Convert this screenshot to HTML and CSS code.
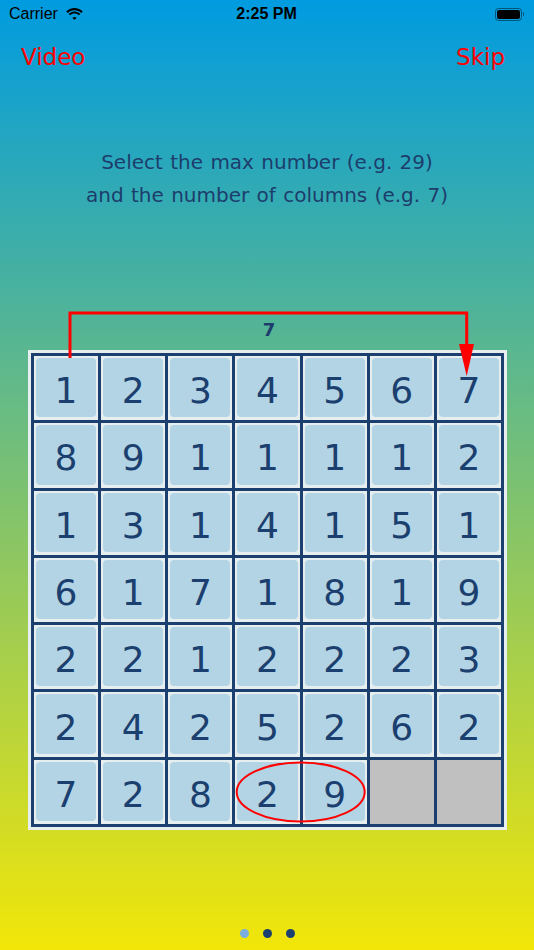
FILE: index.html
```html
<!DOCTYPE html>
<html>
<head>
<meta charset="utf-8">
<link rel="stylesheet" href="styles.css">
</head>
<body>
<div class="screen">
  <div class="status">
    <div class="status-left">
      <span class="carrier">Carrier</span>
      <svg class="wifi" width="19" height="14" viewBox="0 0 19 14">
        <path d="M9.5 3.2c2.6 0 5 1 6.8 2.7l1.5-1.5C15.6 2.3 12.7 1 9.5 1S3.4 2.3 1.2 4.4l1.5 1.5C4.5 4.2 6.9 3.2 9.5 3.2z"/>
        <path d="M9.5 6.6c1.7 0 3.2.6 4.4 1.7l1.5-1.5c-1.6-1.5-3.6-2.4-5.9-2.4s-4.3.9-5.9 2.4l1.5 1.5c1.2-1.1 2.7-1.7 4.4-1.7z"/>
        <path d="M9.5 9.9c.8 0 1.5.3 2.1.8L9.5 12.9 7.4 10.7c.6-.5 1.3-.8 2.1-.8z"/>
      </svg>
    </div>
    <div class="time">2:25 PM</div>
    <div class="status-right">
      <div class="battery"><div class="battery-fill"></div></div>
      <div class="battery-nub"></div>
    </div>
  </div>

  <div class="nav">
    <span class="nav-btn">Video</span>
    <span class="nav-btn">Skip</span>
  </div>

  <div class="instructions">
    <div>Select the max number (e.g. 29)</div>
    <div>and the number of columns (e.g. 7)</div>
  </div>

  <div class="board">
    <div class="col-label">7</div>
    <div class="frame">
      <div class="grid">
        <div class="cell"><div class="tile">1</div></div>
        <div class="cell"><div class="tile">2</div></div>
        <div class="cell"><div class="tile">3</div></div>
        <div class="cell"><div class="tile">4</div></div>
        <div class="cell"><div class="tile">5</div></div>
        <div class="cell"><div class="tile">6</div></div>
        <div class="cell"><div class="tile">7</div></div>

        <div class="cell"><div class="tile">8</div></div>
        <div class="cell"><div class="tile">9</div></div>
        <div class="cell"><div class="tile">1</div></div>
        <div class="cell"><div class="tile">1</div></div>
        <div class="cell"><div class="tile">1</div></div>
        <div class="cell"><div class="tile">1</div></div>
        <div class="cell"><div class="tile">2</div></div>

        <div class="cell"><div class="tile">1</div></div>
        <div class="cell"><div class="tile">3</div></div>
        <div class="cell"><div class="tile">1</div></div>
        <div class="cell"><div class="tile">4</div></div>
        <div class="cell"><div class="tile">1</div></div>
        <div class="cell"><div class="tile">5</div></div>
        <div class="cell"><div class="tile">1</div></div>

        <div class="cell"><div class="tile">6</div></div>
        <div class="cell"><div class="tile">1</div></div>
        <div class="cell"><div class="tile">7</div></div>
        <div class="cell"><div class="tile">1</div></div>
        <div class="cell"><div class="tile">8</div></div>
        <div class="cell"><div class="tile">1</div></div>
        <div class="cell"><div class="tile">9</div></div>

        <div class="cell"><div class="tile">2</div></div>
        <div class="cell"><div class="tile">2</div></div>
        <div class="cell"><div class="tile">1</div></div>
        <div class="cell"><div class="tile">2</div></div>
        <div class="cell"><div class="tile">2</div></div>
        <div class="cell"><div class="tile">2</div></div>
        <div class="cell"><div class="tile">3</div></div>

        <div class="cell"><div class="tile">2</div></div>
        <div class="cell"><div class="tile">4</div></div>
        <div class="cell"><div class="tile">2</div></div>
        <div class="cell"><div class="tile">5</div></div>
        <div class="cell"><div class="tile">2</div></div>
        <div class="cell"><div class="tile">6</div></div>
        <div class="cell"><div class="tile">2</div></div>

        <div class="cell"><div class="tile">7</div></div>
        <div class="cell"><div class="tile">2</div></div>
        <div class="cell"><div class="tile">8</div></div>
        <div class="cell"><div class="tile">2</div></div>
        <div class="cell"><div class="tile">9</div></div>
        <div class="cell empty"></div>
        <div class="cell empty"></div>
      </div>
    </div>
    <svg class="overlay" viewBox="0 0 479 524" width="479" height="524">
      <polyline points="42,53 42,8 438.7,8 438.7,40" fill="none" stroke="#ff0000" stroke-width="3"/>
      <polygon points="431,39 446,39 438.7,71" fill="#ff0000"/>
      <ellipse cx="272.7" cy="487" rx="64" ry="29.5" fill="none" stroke="#ff0000" stroke-width="2"/>
    </svg>
  </div>

  <div class="dots">
    <span class="dot active"></span>
    <span class="dot"></span>
    <span class="dot"></span>
  </div>
</div>
</body>
</html>
```
FILE: styles.css
```css
html, body {
  margin: 0;
  padding: 0;
}
.screen {
  width: 534px;
  height: 950px;
  display: flex;
  flex-direction: column;
  background: linear-gradient(180deg, #009be0 0%, #f2e608 100%);
  font-family: "DejaVu Sans", sans-serif;
  overflow: hidden;
}
.status {
  height: 28px;
  display: grid;
  grid-template-columns: 1fr auto 1fr;
  align-items: center;
  padding: 0 10px 0 9px;
  font-family: "Liberation Sans", Arial, sans-serif;
  font-size: 16px;
  color: #000;
}
.status-left {
  display: flex;
  align-items: center;
  gap: 7px;
}
.wifi path { fill: #000; }
.time {
  font-weight: 600;
}
.status-right {
  display: flex;
  justify-content: flex-end;
  align-items: center;
  gap: 1px;
}
.battery {
  border: 1px solid rgba(0,0,0,0.45);
  border-radius: 3.5px;
  padding: 1px;
  box-sizing: border-box;
  width: 27px;
  height: 13px;
}
.battery-fill {
  width: 100%;
  height: 100%;
  background: #000;
  border-radius: 2px;
}
.battery-nub {
  width: 1.5px;
  height: 4px;
  background: rgba(0,0,0,0.45);
  border-radius: 0 1px 1px 0;
}
.nav {
  margin-top: 14px;
  height: 30px;
  display: flex;
  justify-content: space-between;
  align-items: center;
  padding: 0 29px 0 21px;
}
.nav-btn {
  color: #ff0000;
  font-size: 23px;
  line-height: 30px;
}
.instructions {
  margin-top: 74px;
  text-align: center;
  color: #1d3d6c;
  font-size: 20px;
  word-spacing: 1px;
  line-height: 33px;
}
.board {
  position: relative;
  margin-top: 93px;
  margin-left: 28px;
  width: 479px;
  padding-top: 15px;
}
.col-label {
  height: 20px;
  line-height: 20px;
  text-align: center;
  font-size: 18px;
  font-weight: bold;
  color: #1d3d6c;
  padding-left: 3px;
  margin-bottom: 10px;
}
.frame {
  background: #e7eef0;
  padding: 3px;
}
.grid {
  display: grid;
  grid-template-columns: repeat(7, 1fr);
  grid-auto-rows: 64.3px;
  gap: 3px;
  padding: 3px;
  background: #1b3f6e;
}
.cell {
  background: #e7eef0;
  padding: 2px 2px 3px 2px;
  box-sizing: border-box;
}
.cell.empty {
  background: #c0c0c0;
}
.tile {
  height: 100%;
  background: #b3d4e5;
  border-radius: 4px;
  display: flex;
  align-items: center;
  justify-content: center;
  font-size: 36px;
  color: #1b3f6e;
  padding-top: 6px;
  box-sizing: border-box;
}
.overlay {
  position: absolute;
  left: 0;
  top: 0;
  pointer-events: none;
}
.dots {
  margin-top: auto;
  padding-bottom: 12px;
  display: flex;
  justify-content: center;
  gap: 14px;
}
.dot {
  width: 9px;
  height: 9px;
  border-radius: 50%;
  background: #1b3f6e;
}
.dot.active {
  background: #7aaede;
}
```
